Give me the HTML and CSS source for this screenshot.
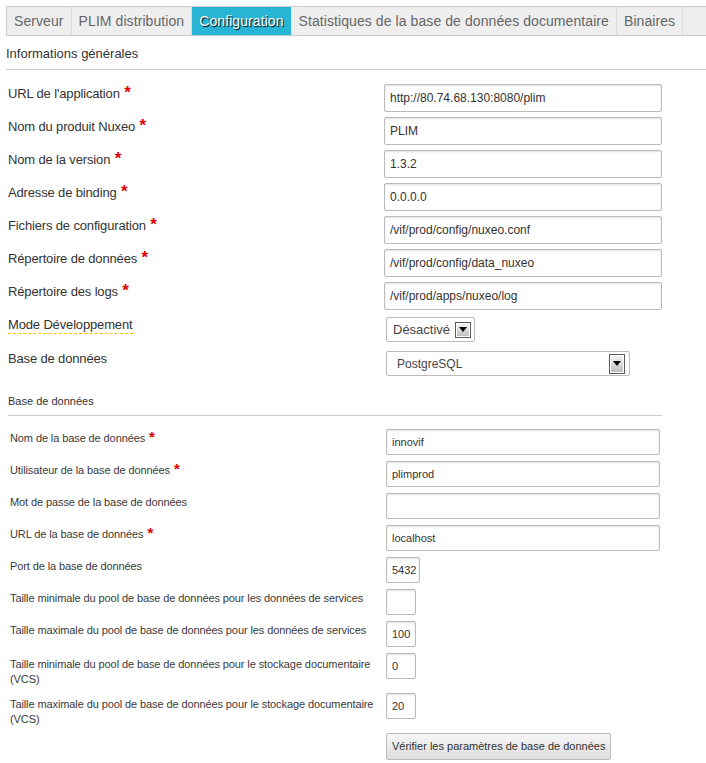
FILE: index.html
```html
<!DOCTYPE html>
<html lang="fr">
<head>
<meta charset="utf-8">
<title>Configuration</title>
<link rel="stylesheet" href="styles.css">
</head>
<body>
<div class="tabs">
  <span class="tab">Serveur</span>
  <span class="tab">PLIM distribution</span>
  <span class="tab active">Configuration</span>
  <span class="tab">Statistiques de la base de données documentaire</span>
  <span class="tab">Binaires</span>
</div>

<div class="title">Informations générales</div>

<div class="form main">
  <div class="row"><div class="lbl">URL de l'application <span class="req">*</span></div><div class="field">http://80.74.68.130:8080/plim</div></div>
  <div class="row"><div class="lbl">Nom du produit Nuxeo <span class="req">*</span></div><div class="field">PLIM</div></div>
  <div class="row"><div class="lbl">Nom de la version <span class="req">*</span></div><div class="field">1.3.2</div></div>
  <div class="row"><div class="lbl">Adresse de binding <span class="req">*</span></div><div class="field">0.0.0.0</div></div>
  <div class="row"><div class="lbl">Fichiers de configuration <span class="req">*</span></div><div class="field">/vif/prod/config/nuxeo.conf</div></div>
  <div class="row"><div class="lbl">Répertoire de données <span class="req">*</span></div><div class="field">/vif/prod/config/data_nuxeo</div></div>
  <div class="row"><div class="lbl">Répertoire des logs <span class="req">*</span></div><div class="field">/vif/prod/apps/nuxeo/log</div></div>
  <div class="row sel"><div class="lbl"><span class="tip">Mode Développement</span></div><div class="select mode"><span class="val">Désactivé</span><span class="arrow"></span></div></div>
  <div class="row sel"><div class="lbl">Base de données</div><div class="select db"><span class="val">PostgreSQL</span><span class="arrow tall"></span></div></div>
</div>

<div class="subtitle">Base de données</div>

<div class="form sub">
  <div class="row"><div class="lbl">Nom de la base de données <span class="req">*</span></div><div class="field">innovif</div></div>
  <div class="row"><div class="lbl">Utilisateur de la base de données <span class="req">*</span></div><div class="field">plimprod</div></div>
  <div class="row"><div class="lbl">Mot de passe de la base de données</div><div class="field"></div></div>
  <div class="row"><div class="lbl">URL de la base de données <span class="req">*</span></div><div class="field">localhost</div></div>
  <div class="row"><div class="lbl">Port de la base de données</div><div class="field port">5432</div></div>
  <div class="row"><div class="lbl">Taille minimale du pool de base de données pour les données de services</div><div class="field xs"></div></div>
  <div class="row"><div class="lbl">Taille maximale du pool de base de données pour les données de services</div><div class="field xs">100</div></div>
  <div class="row two"><div class="lbl">Taille minimale du pool de base de données pour le stockage documentaire (VCS)</div><div class="field xs">0</div></div>
  <div class="row two"><div class="lbl">Taille maximale du pool de base de données pour le stockage documentaire (VCS)</div><div class="field xs">20</div></div>
  <div class="row"><div class="lbl"></div><div class="button">Vérifier les paramètres de base de données</div></div>
</div>
</body>
</html>
```

FILE: styles.css
```css
body {
  margin: 0;
  font-family: "Liberation Sans", Arial, sans-serif;
  color: #333;
  background: #fff;
}

/* Tabs */
.tabs {
  display: flex;
  margin: 6px 0 0 6px;
  height: 30px;
  box-sizing: border-box;
  border: 1px solid #cccccc;
  border-right: 0;
  background: #eeeeee;
}
.tab {
  padding: 0 7px;
  line-height: 28px;
  font-size: 14px;
  letter-spacing: 0.08px;
  color: #666;
  border-right: 1px solid #dddddd;
  white-space: nowrap;
}
.tab.active {
  background: #29b6d6;
  color: #fff;
  text-shadow: 1px 1px 1px #000;
}

/* Section titles */
.title {
  margin: 10px 0 0 6px;
  font-size: 13px;
  line-height: 15px;
  padding-bottom: 8px;
  border-bottom: 1px solid #cccccc;
}
.subtitle {
  margin: 17px 0 0 8px;
  width: 654px;
  font-size: 11px;
  line-height: 13px;
  padding-bottom: 7px;
  border-bottom: 1px solid #cccccc;
}

/* Forms */
.form {
  display: flex;
  flex-direction: column;
}
.form.main {
  padding: 14px 0 0 8px;
  gap: 5px;
}
.form.sub {
  padding: 13px 0 0 10px;
  gap: 6px;
}
.row {
  display: flex;
  align-items: flex-start;
}
.lbl {
  flex: none;
  width: 376px;
}
.main .lbl {
  font-size: 13px;
  line-height: 15px;
  letter-spacing: -0.15px;
  padding-top: 2px;
}
.sub .lbl {
  width: 370px;
  margin-right: 6px;
  font-size: 11px;
  line-height: 15px;
  letter-spacing: -0.1px;
  padding-top: 2px;
  color: #3a3a3a;
}
.sub .row.two .lbl {
  padding-top: 4px;
}
.req {
  color: #d00;
  font-weight: bold;
  line-height: 0;
  letter-spacing: 0;
  margin-left: 1px;
}
.main .req {
  font-size: 17px;
}
.sub .req {
  font-size: 15px;
}

.field {
  box-sizing: border-box;
  border: 1px solid #bbbbbb;
  border-radius: 2px;
  background: #fff;
  box-shadow: inset 0 1px 2px rgba(0, 0, 0, 0.12);
  padding: 0 5px;
  color: #333;
  white-space: nowrap;
  overflow: hidden;
}
.main .field {
  width: 278px;
  height: 28px;
  font-size: 12px;
  line-height: 26px;
}
.sub .field {
  width: 274px;
  height: 26px;
  font-size: 11px;
  line-height: 24px;
}
.sub .field.port { width: 34px; }
.sub .field.xs { width: 30px; }

/* Select look-alikes */
.row.sel {
  padding: 2px 0;
}
.row.sel .lbl {
  padding-top: 0;
}
.tip {
  display: inline-block;
  line-height: 15px;
  padding-bottom: 1px;
  border-bottom: 1px dashed #ffc400;
}
.select {
  box-sizing: border-box;
  margin-left: 2px;
  height: 25px;
  border: 1px solid #bbbbbb;
  border-radius: 2px;
  background: #fff;
  display: flex;
  align-items: center;
  justify-content: space-between;
  color: #444;
}
.select.mode {
  width: 89px;
  padding: 0 3px 0 6px;
  font-size: 13px;
}
.select.db {
  width: 244px;
  padding: 0 4px 0 10px;
  font-size: 12px;
}
.arrow {
  box-sizing: border-box;
  width: 16px;
  height: 16px;
  border: 1px solid #5a5a5a;
  box-shadow: inset 0 0 0 1px #fff;
  background: linear-gradient(#f6f6f6, #bcbcbc);
  display: flex;
  align-items: center;
  justify-content: center;
}
.arrow.tall {
  height: 20px;
}
.arrow::after {
  content: "";
  width: 0;
  height: 0;
  border-left: 4px solid transparent;
  border-right: 4px solid transparent;
  border-top: 5px solid #000;
}

/* Button */
.button {
  box-sizing: border-box;
  height: 27px;
  padding: 0 5px;
  border: 1px solid #bbbbbb;
  border-radius: 2px;
  background: linear-gradient(#f6f6f6, #dedede);
  font-size: 11px;
  line-height: 25px;
  color: #333;
  white-space: nowrap;
}
```
